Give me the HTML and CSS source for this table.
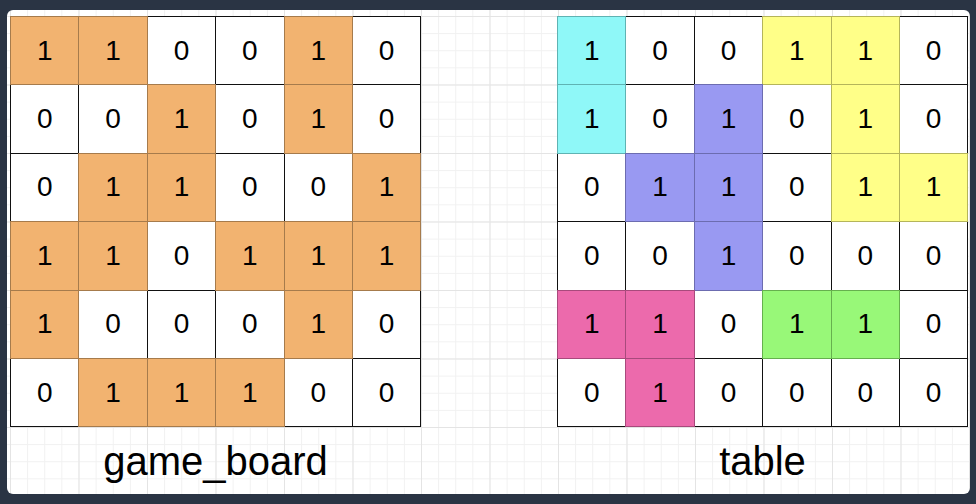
FILE: index.html
```html
<!DOCTYPE html>
<html>
<head>
<meta charset="utf-8">
<link rel="stylesheet" href="styles.css">
</head>
<body>
<div class="panel">
  <div class="board">
    <div class="grid">
      <div class="c o">1</div><div class="c o">1</div><div class="c">0</div><div class="c">0</div><div class="c o">1</div><div class="c">0</div>
      <div class="c">0</div><div class="c">0</div><div class="c o">1</div><div class="c">0</div><div class="c o">1</div><div class="c">0</div>
      <div class="c">0</div><div class="c o">1</div><div class="c o">1</div><div class="c">0</div><div class="c">0</div><div class="c o">1</div>
      <div class="c o">1</div><div class="c o">1</div><div class="c">0</div><div class="c o">1</div><div class="c o">1</div><div class="c o">1</div>
      <div class="c o">1</div><div class="c">0</div><div class="c">0</div><div class="c">0</div><div class="c o">1</div><div class="c">0</div>
      <div class="c">0</div><div class="c o">1</div><div class="c o">1</div><div class="c o">1</div><div class="c">0</div><div class="c">0</div>
    </div>
    <div class="label">game_board</div>
  </div>
  <div class="board">
    <div class="grid">
      <div class="c cy">1</div><div class="c">0</div><div class="c">0</div><div class="c ye">1</div><div class="c ye">1</div><div class="c">0</div>
      <div class="c cy">1</div><div class="c">0</div><div class="c pu">1</div><div class="c">0</div><div class="c ye">1</div><div class="c">0</div>
      <div class="c">0</div><div class="c pu">1</div><div class="c pu">1</div><div class="c">0</div><div class="c ye">1</div><div class="c ye">1</div>
      <div class="c">0</div><div class="c">0</div><div class="c pu">1</div><div class="c">0</div><div class="c">0</div><div class="c">0</div>
      <div class="c pk">1</div><div class="c pk">1</div><div class="c">0</div><div class="c gr">1</div><div class="c gr">1</div><div class="c">0</div>
      <div class="c">0</div><div class="c pk">1</div><div class="c">0</div><div class="c">0</div><div class="c">0</div><div class="c">0</div>
    </div>
    <div class="label">table</div>
  </div>
</div>
</body>
</html>
```

FILE: styles.css
```css
html, body {
  margin: 0;
  padding: 0;
  background: #2a3444;
}
body {
  width: 976px;
  height: 504px;
  overflow: hidden;
}
.panel {
  margin: 10px 6px 0 7px;
  width: 963px;
  height: 484px;
  border-radius: 6px;
  box-sizing: border-box;
  padding: 6px 0 0 3px;
  display: flex;
  gap: 136px;
  background-color: #fff;
  background-image:
    linear-gradient(to right, #e4e4e4 1px, transparent 1px),
    linear-gradient(to bottom, #e4e4e4 1px, transparent 1px),
    linear-gradient(to right, #f1f1f1 1px, transparent 1px),
    linear-gradient(to bottom, #f1f1f1 1px, transparent 1px);
  background-size: 68.5px 68.5px, 68.5px 68.5px, 17.125px 17.125px, 17.125px 17.125px;
  background-position: 3px 6px;
}
.board {
  display: flex;
  flex-direction: column;
  width: 411px;
}
.grid {
  display: grid;
  grid-template-columns: repeat(6, 68.4px);
  grid-template-rows: repeat(6, 68.4px);
}
.c {
  position: relative;
  width: calc(100% + 1px);
  height: calc(100% + 1px);
  box-sizing: border-box;
  border: 1px solid #111;
  background: #fff;
  display: flex;
  align-items: center;
  justify-content: center;
  font-family: "Liberation Sans", Arial, sans-serif;
  font-size: 28px;
  color: #000;
}
.o { background: #f2b370; border-color: #a67b4c; z-index: 1; }
.cy { background: #8ff8f8; border-color: #5fb3b3; z-index: 1; }
.ye { background: #ffff88; border-color: #b5b55a; z-index: 1; }
.pu { background: #9999f2; border-color: #6c6cb0; z-index: 1; }
.pk { background: #ec6aac; border-color: #a84a7c; z-index: 1; }
.gr { background: #98f878; border-color: #66b04e; z-index: 1; }
.label {
  text-align: center;
  font-family: "Liberation Sans", Arial, sans-serif;
  font-size: 40px;
  color: #000;
  margin-top: 13px;
  line-height: 44px;
}
```
